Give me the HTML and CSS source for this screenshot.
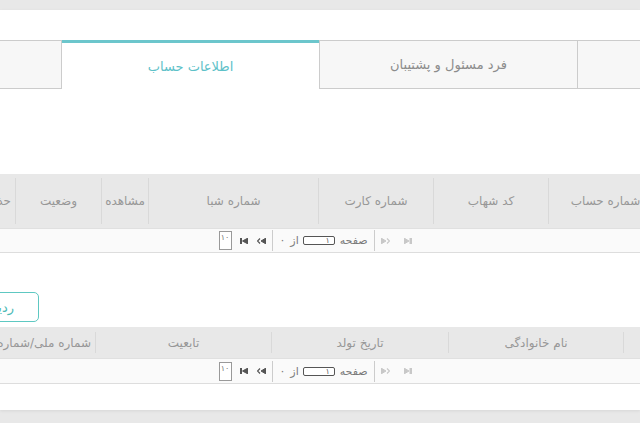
FILE: index.html
```html
<!DOCTYPE html>
<html lang="fa" dir="rtl">
<head>
  <meta charset="UTF-8">
  <meta name="viewport" content="width=device-width, initial-scale=1.0">
  <title>اطلاعات حساب</title>
  <link rel="stylesheet" href="styles.css">
</head>

<body>
  <div class="panel">
    <div class="tabs">
      <div class="tab tab-edge-right"></div>
      <div class="tab tab-wide">فرد مسئول و پشتیبان</div>
      <div class="tab active">اطلاعات حساب</div>
      <div class="tab tab-edge-left"></div>
    </div>

    <div class="grid grid-accounts">
      <div class="grid-head">
        <div class="col" style="width: 114px;">شماره حساب</div>
        <div class="col" style="width: 115px;">کد شهاب</div>
        <div class="col" style="width: 115px;">شماره کارت</div>
        <div class="col" style="width: 170px;">شماره شبا</div>
        <div class="col" style="width: 47px;">مشاهده</div>
        <div class="col" style="width: 86px;">وضعیت</div>
        <div class="col col-clip">حذف</div>
      </div>
      <div class="pager">
        <span class="ico off"><svg width="8" height="6" viewBox="0 0 8 6"><polygon points="0,0 0,6 5,3"/><rect x="6" y="0" width="1.5" height="6"/></svg></span>
        <span class="ico off gap-prev"><svg width="9" height="6" viewBox="0 0 9 6"><polygon points="0,0 0,6 5,3"/><polyline points="6,0.5 8.5,3 6,5.5" fill="none" stroke-width="1.2"/></svg></span>
        <span class="sep"></span>
        <span class="lbl">صفحه</span>
        <span class="page-input">۱</span>
        <span class="lbl">از</span>
        <span class="lbl total">۰</span>
        <span class="sep"></span>
        <span class="ico"><svg width="9" height="6" viewBox="0 0 9 6"><polyline points="3,0.5 0.5,3 3,5.5" fill="none" stroke-width="1.2"/><polygon points="4,3 9,0 9,6"/></svg></span>
        <span class="ico gap-last"><svg width="8" height="6" viewBox="0 0 8 6"><rect x="0" y="0" width="1.5" height="6"/><polygon points="2.5,3 8,0 8,6"/></svg></span>
        <span class="rows-select">۱۰</span>
      </div>
    </div>

    <div class="toolbar">
      <button class="btn-add">ردیف جدید</button>
    </div>

    <div class="grid grid-people">
      <div class="grid-head">
        <div class="col" style="width: 17px;"></div>
        <div class="col" style="width: 175px;">نام خانوادگی</div>
        <div class="col" style="width: 177px;">تاریخ تولد</div>
        <div class="col" style="width: 176px;">تابعیت</div>
        <div class="col col-clip">شماره ملی/شماره فراگیر اتباع</div>
      </div>
      <div class="pager">
        <span class="ico off"><svg width="8" height="6" viewBox="0 0 8 6"><polygon points="0,0 0,6 5,3"/><rect x="6" y="0" width="1.5" height="6"/></svg></span>
        <span class="ico off gap-prev"><svg width="9" height="6" viewBox="0 0 9 6"><polygon points="0,0 0,6 5,3"/><polyline points="6,0.5 8.5,3 6,5.5" fill="none" stroke-width="1.2"/></svg></span>
        <span class="sep"></span>
        <span class="lbl">صفحه</span>
        <span class="page-input">۱</span>
        <span class="lbl">از</span>
        <span class="lbl total">۰</span>
        <span class="sep"></span>
        <span class="ico"><svg width="9" height="6" viewBox="0 0 9 6"><polyline points="3,0.5 0.5,3 3,5.5" fill="none" stroke-width="1.2"/><polygon points="4,3 9,0 9,6"/></svg></span>
        <span class="ico gap-last"><svg width="8" height="6" viewBox="0 0 8 6"><rect x="0" y="0" width="1.5" height="6"/><polygon points="2.5,3 8,0 8,6"/></svg></span>
        <span class="rows-select">۱۰</span>
      </div>
    </div>
  </div>
</body>
</html>
```

FILE: styles.css
```css
* {
  box-sizing: border-box;
}

body {
  margin: 0;
  padding-top: 10px;
  height: 423px;
  overflow: hidden;
  background-color: #e8e8e8;
  font-family: "DejaVu Sans", sans-serif;
}

.panel {
  direction: rtl;
  height: 400px;
  padding-top: 30px;
  background-color: #fff;
  overflow: hidden;
  box-shadow: 0 1px 3px rgba(0, 0, 0, 0.08);
}

/* tabs */
.tabs {
  display: flex;
  height: 49px;
}

.tab {
  flex: none;
  display: flex;
  align-items: center;
  justify-content: center;
  background-color: #f7f7f7;
  border-top: 1px solid #ccc;
  border-bottom: 1px solid #ccc;
  border-left: 1px solid #ccc;
  color: #8c8c8c;
  font-size: 13px;
}

.tab-edge-right {
  width: 63px;
}

.tab-wide {
  width: 258px;
}

.tab.active {
  width: 257px;
  background-color: #fff;
  border: none;
  border-top: 3px solid #6cc6cc;
  color: #5dc1c8;
}

.tab-edge-left {
  flex: 1;
  border-left: none;
  border-right: 1px solid #ccc;
}

/* grids */
.grid-accounts {
  margin-top: 85px;
}

.grid-people {
  margin-top: 5px;
}

.grid-head {
  display: flex;
  background-color: #e8e8e8;
}

.grid-accounts .grid-head {
  height: 54px;
  padding: 4px 0;
  margin-right: -22px;
}

.grid-people .grid-head {
  height: 31px;
  padding: 5px 0;
}

.col {
  flex: none;
  display: flex;
  align-items: center;
  justify-content: center;
  border-left: 1px solid #d9d9d9;
  color: #979797;
  font-size: 12px;
  white-space: nowrap;
  overflow: hidden;
}

.col-clip {
  flex: 1;
  justify-content: flex-start;
  padding-right: 4px;
  border-left: none;
}

/* pager */
.pager {
  display: flex;
  align-items: center;
  justify-content: center;
  height: 25px;
  padding-right: 9px;
  background-color: #fafafa;
  border-top: 1px solid #e0e0e0;
  border-bottom: 1px solid #ddd;
  color: #7a7a7a;
  font-size: 11px;
}

.grid-people .pager {
  height: 26px;
}

.ico {
  display: flex;
  fill: #555;
  stroke: #555;
  margin-left: 9px;
}

.ico.off {
  fill: #c8c8c8;
  stroke: #c8c8c8;
  margin-left: 14px;
}

.ico.off.gap-prev {
  margin-left: 6px;
}

.ico.gap-last {
  margin-left: 8px;
}

.sep {
  width: 1px;
  height: 21px;
  background-color: #ccc;
  margin-left: 6px;
}

.lbl {
  margin-left: 5px;
}

.lbl.total {
  margin-left: 6px;
}

.page-input {
  width: 32px;
  height: 9px;
  margin-left: 4px;
  border: 1px solid #555;
  border-radius: 2px;
  background-color: #fff;
  font-size: 8px;
  line-height: 7px;
  padding-right: 4px;
  color: #666;
}

.rows-select {
  width: 13px;
  height: 19px;
  border: 1px solid #999;
  font-size: 8px;
  line-height: 11px;
  padding-right: 2px;
  color: #777;
  background-color: #fff;
}

/* toolbar */
.toolbar {
  display: flex;
  justify-content: flex-end;
  margin-top: 39px;
}

.btn-add {
  width: 100px;
  height: 30px;
  margin-left: -61px;
  padding: 0 24px 0 0;
  text-align: right;
  background-color: #fff;
  border: 1px solid #5ec8c2;
  border-radius: 5px;
  color: #4dbab6;
  font-family: "DejaVu Sans", sans-serif;
  font-size: 13px;
  white-space: nowrap;
  overflow: hidden;
}
```
